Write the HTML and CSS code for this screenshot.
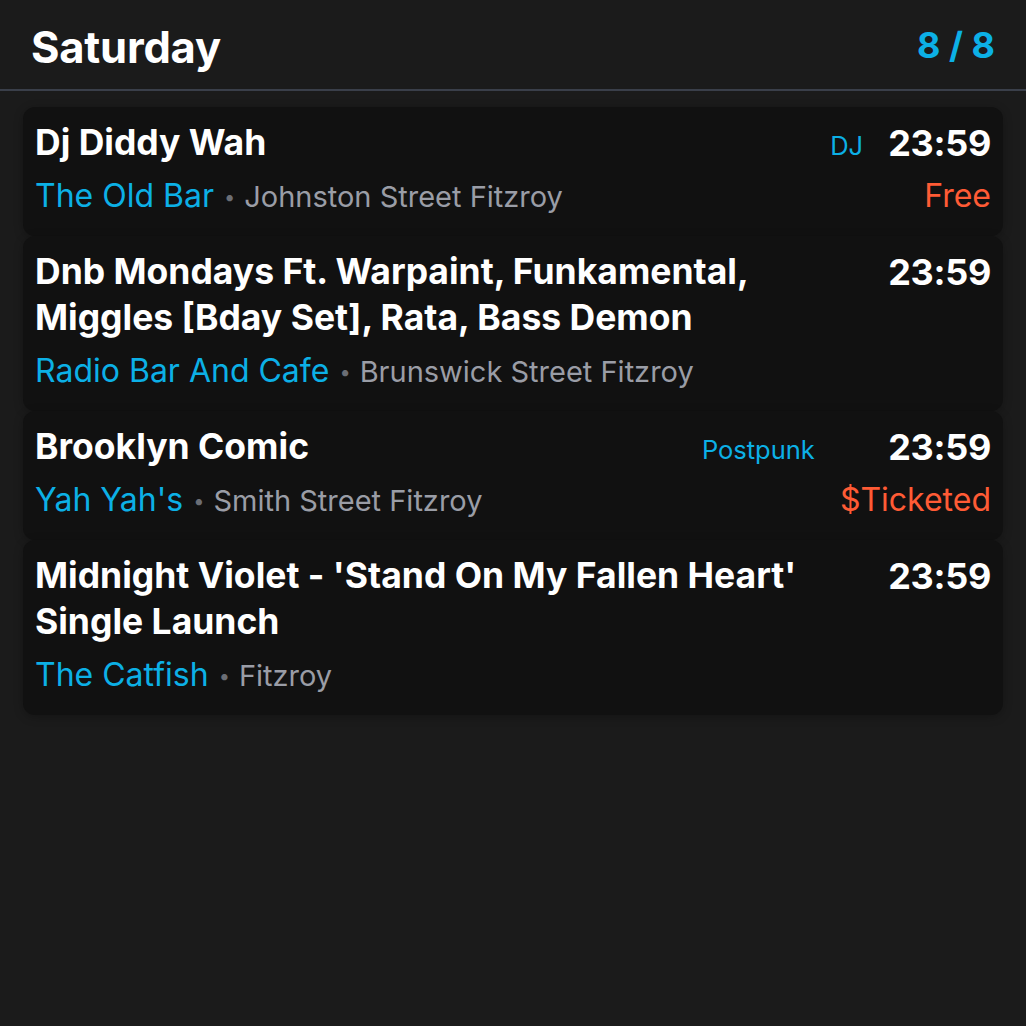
FILE: index.html
```html
<!DOCTYPE html>
<html lang="en">
<head>
<meta charset="utf-8">
<title>Saturday</title>
<link rel="stylesheet" href="styles.css">
</head>
<body>
<header class="day-header">
  <h1 class="day-title">Saturday</h1>
  <span class="day-count">8 / 8</span>
</header>
<main class="event-list">
  <article class="event">
    <div class="event-main">
      <div class="event-top">
        <h2 class="event-title">Dj Diddy Wah</h2>
        <span class="event-tag">DJ</span>
      </div>
      <div class="event-place"><span class="venue">The Old Bar</span><span class="dot">•</span><span class="area">Johnston Street Fitzroy</span></div>
    </div>
    <div class="event-side">
      <span class="event-time">23:59</span>
      <span class="event-price">Free</span>
    </div>
  </article>
  <article class="event">
    <div class="event-main">
      <div class="event-top">
        <h2 class="event-title">Dnb Mondays Ft. Warpaint, Funkamental, Miggles [Bday Set], Rata, Bass Demon</h2>
      </div>
      <div class="event-place"><span class="venue">Radio Bar And Cafe</span><span class="dot">•</span><span class="area">Brunswick Street Fitzroy</span></div>
    </div>
    <div class="event-side">
      <span class="event-time">23:59</span>
    </div>
  </article>
  <article class="event">
    <div class="event-main">
      <div class="event-top">
        <h2 class="event-title">Brooklyn Comic</h2>
        <span class="event-tag">Postpunk</span>
      </div>
      <div class="event-place"><span class="venue">Yah Yah's</span><span class="dot">•</span><span class="area">Smith Street Fitzroy</span></div>
    </div>
    <div class="event-side">
      <span class="event-time">23:59</span>
      <span class="event-price">$Ticketed</span>
    </div>
  </article>
  <article class="event">
    <div class="event-main">
      <div class="event-top">
        <h2 class="event-title">Midnight Violet - 'Stand On My Fallen Heart' Single Launch</h2>
      </div>
      <div class="event-place"><span class="venue">The Catfish</span><span class="dot">•</span><span class="area">Fitzroy</span></div>
    </div>
    <div class="event-side">
      <span class="event-time">23:59</span>
    </div>
  </article>
</main>
</body>
</html>
```

FILE: styles.css
```css
html, body {
  margin: 0;
  padding: 0;
  background: #1b1b1b;
  font-family: Inter, "Noto Sans", sans-serif;
  color: #ffffff;
}

.day-header {
  display: flex;
  align-items: center;
  justify-content: space-between;
  padding: 0 31px;
  border-bottom: 2px solid #3a3f4a;
  box-sizing: border-box;
  height: 91px;
}

.day-title {
  margin: 0;
  font-size: 43.5px;
  font-weight: 700;
  letter-spacing: -0.2px;
  position: relative;
  top: 2px;
}

.day-count {
  font-size: 36px;
  font-weight: 700;
  color: #0cb0e6;
}

.event-list {
  display: flex;
  flex-direction: column;
  padding: 16px 23px;
}

.event {
  display: flex;
  gap: 26px;
  background: #111111;
  border-radius: 12px;
  padding: 13px 12px 20px 12px;
  box-shadow: 0 2px 10px rgba(0, 0, 0, 0.25);
}

.event-main {
  flex: 1;
  min-width: 0;
}

.event-top {
  display: flex;
  align-items: flex-start;
  gap: 22px;
}

.event-title {
  flex: 1;
  margin: 0;
  font-size: 35.5px;
  line-height: 46px;
  font-weight: 700;
}

.event-tag {
  font-size: 25.5px;
  line-height: 46px;
  color: #0cb0e6;
  position: relative;
  top: 3px;
  right: -1px;
}

.event-place {
  display: flex;
  align-items: baseline;
  margin-top: 10px;
  height: 40px;
  white-space: nowrap;
}

.venue {
  color: #0cb0e6;
  font-size: 32px;
  line-height: 40px;
}

.dot {
  color: #6b6e75;
  font-size: 20px;
  line-height: 40px;
  margin: 0 9px 0 10px;
  position: relative;
  top: -3px;
}

.area {
  color: #9a9da6;
  font-size: 29px;
  line-height: 40px;
}

.event-side {
  display: flex;
  flex-direction: column;
  align-items: flex-end;
}

.event-time {
  font-size: 36px;
  line-height: 46px;
  font-weight: 700;
  letter-spacing: -0.3px;
}

.event-price {
  margin-top: 10px;
  font-size: 32px;
  line-height: 40px;
  color: #ff5b35;
}
```
